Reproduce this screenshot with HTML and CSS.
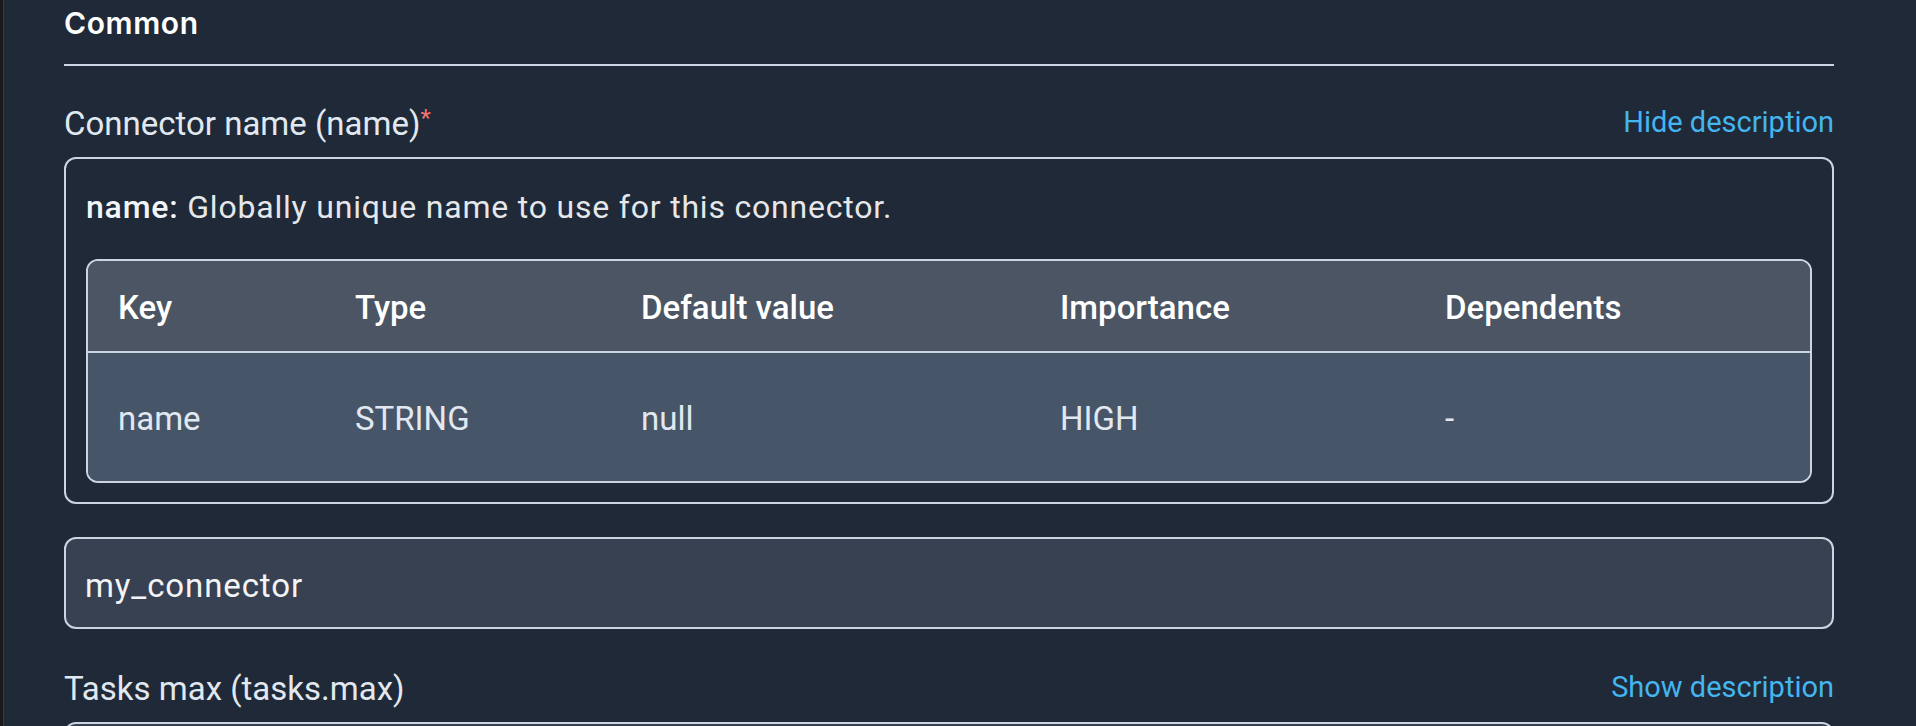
FILE: index.html
```html
<!DOCTYPE html>
<html lang="en">
<head>
<meta charset="utf-8">
<title>Connector config</title>
<link rel="stylesheet" href="styles.css">
</head>
<body>
<div class="app">
  <div class="edge"></div>
  <main class="panel">
    <section class="group">
      <h2 class="group-title">Common</h2>

      <div class="field">
        <div class="field-head">
          <label class="field-label">Connector name (name)<span class="req">*</span></label>
          <a class="toggle">Hide description</a>
        </div>
        <div class="desc">
          <p class="desc-text"><strong>name:</strong> Globally unique name to use for this connector.</p>
          <div class="cfg-wrap">
            <table class="cfg">
              <colgroup>
                <col class="c-key"><col class="c-type"><col class="c-def"><col class="c-imp"><col class="c-dep">
              </colgroup>
              <thead>
                <tr><th>Key</th><th>Type</th><th>Default value</th><th>Importance</th><th>Dependents</th></tr>
              </thead>
              <tbody>
                <tr><td>name</td><td>STRING</td><td>null</td><td>HIGH</td><td>-</td></tr>
              </tbody>
            </table>
          </div>
        </div>
        <div class="input">my_connector</div>
      </div>

      <div class="field">
        <div class="field-head">
          <label class="field-label">Tasks max (tasks.max)</label>
          <a class="toggle">Show description</a>
        </div>
        <div class="input"></div>
      </div>
    </section>
  </main>
</div>
</body>
</html>
```

FILE: styles.css
```css
* { box-sizing: border-box; }

html, body {
  margin: 0;
  height: 100%;
  background: #1f2937;
  overflow: hidden;
}

body {
  font-family: Roboto, "Liberation Sans", sans-serif;
  color: #e2e8f0;
}

.app {
  display: flex;
  min-height: 100%;
}

.edge {
  width: 4px;
  flex: none;
  background: #1a1a1a;
  border-right: 1px solid #363b44;
}

.panel {
  flex: 1;
  padding: 0 82px 0 60px;
}

.group-title {
  margin: 0;
  padding: 6px 0 24px;
  font-family: Inter, "Noto Sans", sans-serif;
  font-weight: 600;
  font-size: 30px;
  letter-spacing: 0.6px;
  line-height: 34px;
  color: #ffffff;
  border-bottom: 2px solid #cbd5e1;
}

.field {
  margin-top: 38px;
}

.field + .field {
  margin-top: 40px;
}

.field-head {
  display: flex;
  justify-content: space-between;
  align-items: center;
  height: 40px;
  margin-bottom: 13px;
}

.field-label {
  font-size: 33px;
  line-height: 40px;
  color: #e2e8f0;
}

.req {
  color: #f87171;
  font-size: 24px;
  vertical-align: top;
  line-height: 24px;
  position: relative;
  top: 2px;
}

.toggle {
  font-size: 29px;
  line-height: 34px;
  color: #45b5f0;
  margin-bottom: 4px;
  cursor: pointer;
}

.desc {
  border: 2px solid #cbd5e1;
  border-radius: 12px;
  padding: 28px 20px 19px;
  margin-bottom: 33px;
}

.desc-text {
  margin: 0 0 32px;
  font-size: 32px;
  line-height: 40px;
  letter-spacing: 0.8px;
  color: #e5e7eb;
}

.desc-text strong {
  font-weight: 500;
  color: #f1f5f9;
}

.cfg-wrap {
  border: 2px solid #cbd5e1;
  border-radius: 12px;
  overflow: hidden;
}

.cfg {
  width: 100%;
  border-collapse: collapse;
  table-layout: fixed;
  font-size: 33px;
  line-height: 40px;
}

.c-key { width: 237px; }
.c-type { width: 286px; }
.c-def { width: 419px; }
.c-imp { width: 385px; }

.cfg th {
  background: #4b5563;
  color: #ffffff;
  font-weight: 500;
  text-align: left;
  padding: 27px 30px 23px;
  border-bottom: 2px solid #cbd5e1;
}

.cfg td {
  background: #475569;
  color: #e2e8f0;
  padding: 46px 30px 42px;
}

.input {
  border: 2px solid #cbd5e1;
  border-radius: 12px;
  background: #374151;
  padding: 27px 19px 21px;
  min-height: 92px;
  font-size: 33px;
  line-height: 40px;
  letter-spacing: 0.9px;
  color: #f3f4f6;
}
```
